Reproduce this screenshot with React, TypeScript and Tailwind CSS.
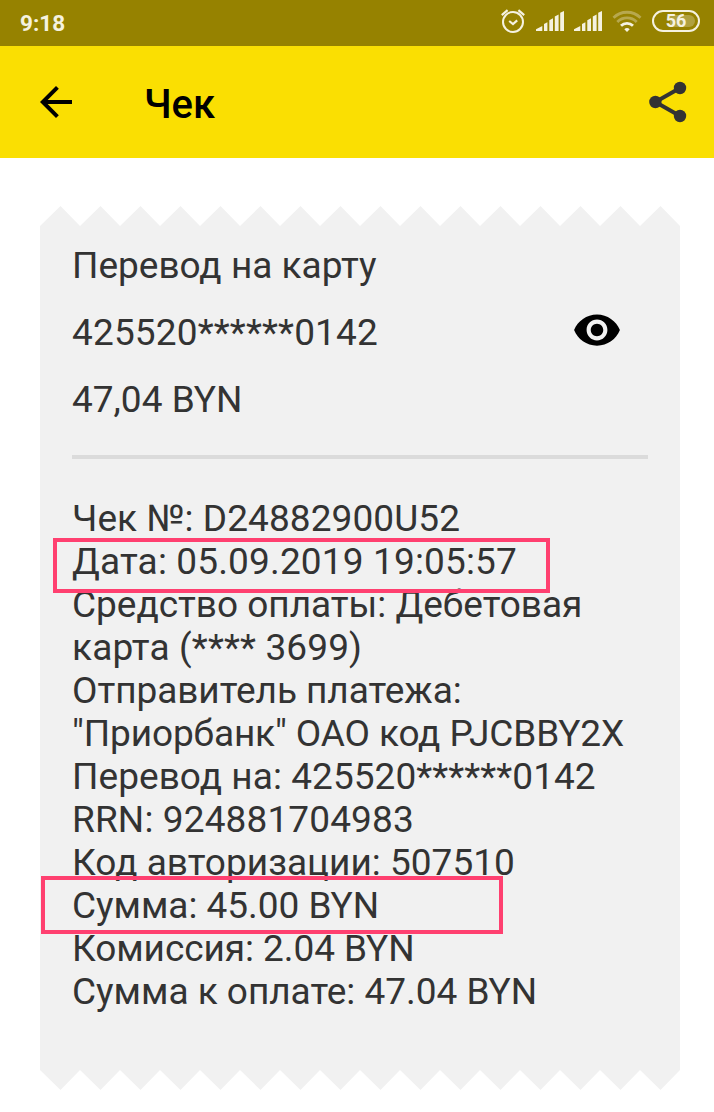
import React from 'react';

const TEETH = 16;

const details = [
  { text: 'Чек №: D24882900U52', tracking: 'tracking-[0.08px]' },
  { text: 'Дата: 05.09.2019 19:05:57', tracking: 'tracking-[0.15px]', mark: '-left-[19px] -top-[2px] h-[55px] w-[497px]' },
  { text: 'Средство оплаты: Дебетовая', tracking: 'tracking-[-0.02px]' },
  { text: 'карта (**** 3699)', tracking: 'tracking-[0.13px]' },
  { text: 'Отправитель платежа:', tracking: 'tracking-[-0.05px]' },
  { text: '"Приорбанк" ОАО код PJCBBY2X', tracking: 'tracking-[-0.12px]' },
  { text: 'Перевод на: 425520******0142', tracking: 'tracking-[0.06px]' },
  { text: 'RRN: 924881704983', tracking: 'tracking-[0.13px]' },
  { text: 'Код авторизации: 507510', tracking: 'tracking-[0.02px]' },
  { text: 'Сумма: 45.00 BYN', tracking: 'tracking-[-0.03px]', mark: '-left-[31px] -top-[8px] h-[58px] w-[462px]' },
  { text: 'Комиссия: 2.04 BYN', tracking: 'tracking-[-0.07px]' },
  { text: 'Сумма к оплате: 47.04 BYN', tracking: 'tracking-[-0.02px]' },
];

function AlarmIcon() {
  return (
    <svg className="h-6 w-6" viewBox="0 0 24 24" fill="none" stroke="currentColor" strokeWidth="2">
      <circle cx="12" cy="13" r="10" />
      <path d="M.8 6.2 6.6 1.2M23.2 6.2 17.4 1.2" strokeWidth="2.2" />
      <path d="m8.2 12 3.8 3 4.200-3.600" strokeWidth="2.2" />
    </svg>
  );
}

function SignalIcon() {
  return (
    <svg className="h-5 w-7" viewBox="0 0 28 20" fill="currentColor">
      <path d="M0 20v-1.800L6.300 15v5zM8 13l3.400-1.800V20H8zM13.300 9.300 17 7.200V20h-3.700zM18.800 5.600l3.800-2.100V20h-3.800zM24.200 1.800 28 0v20h-3.800z" />
    </svg>
  );
}

function WifiIcon() {
  return (
    <svg className="h-[22px] w-[30px]" viewBox="0 0 30 22" fill="none" stroke="currentColor" strokeWidth="2.8">
      <path d="M1.500 7.800a19.200 19.200 0 0 1 27 0" opacity="0.35" />
      <path d="M5.300 12a13.700 13.700 0 0 1 19.400 0" opacity="0.35" />
      <path d="M9 15.800a8.500 8.500 0 0 1 12 0" />
      <path d="m15 22-2.700-2.700a4 4 0 0 1 5.400 0z" fill="currentColor" stroke="none" />
    </svg>
  );
}

// Serrated paper edge, teeth pointing up
function TornEdge({ flip = false }: { flip?: boolean }) {
  let d = 'M0 20';
  for (let i = 0; i < TEETH; i++) {
    d += `L${i * 40 + 20.5} 0L${i * 40 + 40} 20`;
  }
  return (
    <svg className={`block h-5 w-[640px] ${flip ? '-scale-y-100' : ''}`} viewBox="0 0 640 20" fill="#f1f1f1">
      <path d={`${d}Z`} />
    </svg>
  );
}

export default function App() {
  return (
    <div className="h-[1112px] w-[714px] overflow-hidden bg-white font-[Roboto,sans-serif] text-[#333333]">
      {/* Status bar */}
      <div className="flex h-[46px] items-center justify-between bg-[#968200] pl-5 pr-[14px] text-[#f5f2e0]">
        <span className="text-[22.5px] font-bold leading-[44px]">9:18</span>
        <div className="flex items-center pb-1">
          <AlarmIcon />
          <div className="ml-[11px]"><SignalIcon /></div>
          <div className="ml-[10px]"><SignalIcon /></div>
          <div className="ml-[10px]"><WifiIcon /></div>
          <div className="ml-[10px] flex h-[22px] w-12 items-center rounded-full border-2 border-current p-[3px]">
            <div className="flex h-full w-full items-center justify-center rounded-full bg-linear-to-r from-transparent from-35% to-white/25 to-35% text-[18px] font-bold leading-none">
              56
            </div>
          </div>
        </div>
      </div>

      {/* App bar */}
      <header className="flex h-28 items-center bg-[#fadf02] pl-8 pr-[22px] text-black">
        <svg className="h-12 w-12" viewBox="0 0 24 24" fill="currentColor">
          <path d="M20 11H7.83l5.59-5.59L12 4l-8 8 8 8 1.41-1.41L7.83 13H20z" />
        </svg>
        <h1 className="ml-16 mt-1.5 text-[40px] font-medium leading-none">Чек</h1>
        <svg className="ml-auto h-12 w-12 text-[#333333]" viewBox="0 0 24 24" fill="currentColor">
          <path d="M18 5 5.700 12 18 19" fill="none" stroke="currentColor" strokeWidth="2" />
          <circle cx="18" cy="5" r="3.1" />
          <circle cx="5.7" cy="12" r="3.1" />
          <circle cx="18" cy="19" r="3.1" />
        </svg>
      </header>

      {/* Receipt */}
      <main className="mx-10 mt-12 w-[640px] text-[37px] leading-[43px]">
        <TornEdge />
        <div className="h-[844px] bg-[#f1f1f1] px-8 pt-[18px]">
          <p>Перевод на карту</p>
          <div className="mt-6 flex h-[43px] items-center justify-between pr-[26px]">
            <p className="tracking-[0.15px]">425520******0142</p>
            <svg className="-mt-[5px] h-[50px] w-[50px] text-black" viewBox="0 0 24 24" fill="currentColor">
              <path d="M12 4.500C7 4.500 2.730 7.610 1 12c1.730 4.390 6 7.500 11 7.500s9.270-3.110 11-7.500c-1.730-4.390-6-7.500-11-7.500zM12 17c-2.760 0-5-2.240-5-5s2.240-5 5-5 5 2.240 5 5-2.240 5-5 5zm0-8c-1.660 0-3 1.340-3 3s1.340 3 3 3 3-1.340 3-3-1.340-3-3-3z" />
            </svg>
          </div>
          <p className="mt-6">47,04 BYN</p>
          <hr className="mb-[38px] mt-[34px] border-t-4 border-[#dbdbdb]" />
          {details.map((row) => (
            <p key={row.text} className={`relative whitespace-nowrap ${row.tracking}`}>
              {row.text}
              {row.mark && <span className={`absolute z-10 border-4 border-[#ff4070] ${row.mark}`} />}
            </p>
          ))}
        </div>
        <TornEdge flip />
      </main>
    </div>
  );
}
